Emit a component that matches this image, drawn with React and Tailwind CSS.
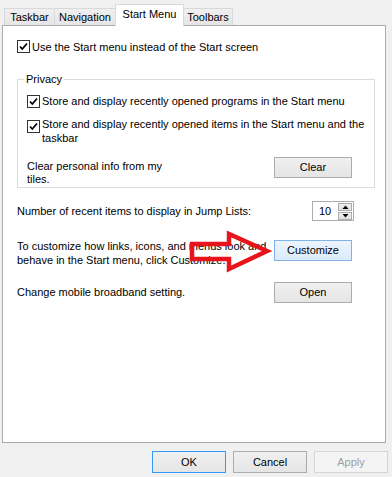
import React from 'react'

const Check = () => (
  <div className="w-[13px] h-[13px] border border-[#333333] bg-white flex items-center justify-center shrink-0">
    <svg width="11" height="11" viewBox="0 0 11 11">
      <path d="M2 5.5 L4.3 8 L9 2.5" stroke="#000" strokeWidth="1.8" fill="none" />
    </svg>
  </div>
)

const Btn = ({ children, className = '' }) => (
  <div
    className={`w-[78px] h-[21px] flex items-center justify-center border border-[#acacac] bg-gradient-to-b from-[#f0f0f0] to-[#e5e5e5] ${className}`}
  >
    {children}
  </div>
)

const Tab = ({ children, active, className = '' }) =>
  active ? (
    <div
      className={`relative z-10 -mb-px h-[22px] flex items-center justify-center bg-white border border-b-0 border-[#d9d9d9] pb-[2px] ${className}`}
    >
      {children}
    </div>
  ) : (
    <div
      className={`h-[17px] flex items-center justify-center bg-gradient-to-b from-[#f0f0f0] to-[#e5e5e5] border border-b-0 border-[#d9d9d9] ${className}`}
    >
      {children}
    </div>
  )

export default function App() {
  return (
    <div
      className="relative w-[392px] h-[477px] bg-[#f0f0f0] text-[11px] text-black overflow-hidden"
      style={{ fontFamily: '"Liberation Sans", Arial, sans-serif' }}
    >
      {/* Tabs */}
      <div className="flex items-end h-[25px] pl-[4px]">
        <Tab className="w-[51px]">Taskbar</Tab>
        <Tab className="w-[61px] border-l-0">Navigation</Tab>
        <Tab active className="w-[69px] -ml-px">Start Menu</Tab>
        <Tab className="w-[50px] -ml-px">Toolbars</Tab>
      </div>

      {/* Panel */}
      <div className="ml-[2px] w-[384px] h-[418px] bg-white border border-[#acacac] pl-[14px] pr-[10px]">
        <div className="mt-[14px] flex items-center gap-[2px] h-[13px]">
          <Check />
          <span className="leading-[14px]">Use the Start menu instead of the Start screen</span>
        </div>

        {/* Privacy group */}
        <div className="relative mt-[26px] h-[109px] border border-[#dcdcdc] pl-[9px] pr-[6px]">
          <span className="absolute left-[6px] top-[-8px] bg-white px-[2px] leading-[14px]">Privacy</span>
          <div className="mt-[14px] flex items-start gap-[2px]">
            <div className="mt-[1px]">
              <Check />
            </div>
            <span className="leading-[14px]">Store and display recently opened programs in the Start menu</span>
          </div>
          <div className="mt-[9px] flex items-start gap-[2px]">
            <div className="mt-[3px]">
              <Check />
            </div>
            <span className="leading-[14px]">
              Store and display recently opened items in the Start menu and the taskbar
            </span>
          </div>
          <div className="mt-[12px] flex items-start justify-between pr-[16px]">
            <span className="mt-[3px] w-[140px] leading-[13px]">Clear personal info from my tiles.</span>
            <Btn className="-ml-[2px]">Clear</Btn>
          </div>
        </div>

        <div className="mt-[13px] h-[20px] flex items-center justify-between pr-[21px]">
          <span>Number of recent items to display in Jump Lists:</span>
          <div className="w-[42px] h-[20px] border border-[#abadb3] flex items-center justify-between pl-[6px] pr-[1px]">
            <span>10</span>
            <div className="flex flex-col gap-px">
              <div className="w-[14px] h-[8px] bg-gradient-to-b from-[#f0f0f0] to-[#e0e0e0] border border-[#acacac] flex items-center justify-center">
                <svg width="7" height="4" viewBox="0 0 7 4"><path d="M0.5 4 L3.5 0.5 L6.5 4 Z" fill="#000" /></svg>
              </div>
              <div className="w-[14px] h-[8px] bg-gradient-to-b from-[#f0f0f0] to-[#e0e0e0] border border-[#acacac] flex items-center justify-center">
                <svg width="7" height="4" viewBox="0 0 7 4"><path d="M0.5 0 L3.5 3.5 L6.5 0 Z" fill="#000" /></svg>
              </div>
            </div>
          </div>
        </div>

        <div className="mt-[18px] flex items-start justify-between pr-[23px]">
          <span className="w-[250px] leading-[14px]">
            To customize how links, icons, and menus look and behave in the Start menu, click Customize.
          </span>
          <Btn className="mt-[1px] !border-[#7eb4ea] !from-[#ecf4fc] !to-[#dcecfc]">Customize</Btn>
        </div>

        <div className="mt-[15px] h-[21px] flex items-center justify-between pr-[23px]">
          <span>Change mobile broadband setting.</span>
          <Btn>Open</Btn>
        </div>
      </div>

      {/* Dialog buttons */}
      <div className="mt-[8px] flex justify-end gap-[7px] pr-[4px]">
        <Btn className="!w-[74px] !h-[22px] !border-[#3399ff]">OK</Btn>
        <Btn className="!w-[74px] !h-[22px]">Cancel</Btn>
        <div className="w-[74px] h-[22px] flex items-center justify-center border border-[#d5d5d5] bg-[#f4f4f4] text-[#a0a0a0]">
          Apply
        </div>
      </div>

      {/* Red arrow annotation */}
      <svg className="absolute left-0 top-0 pointer-events-none" width="392" height="477">
        <polygon
          points="192,244 229,244 229,234 267,251 229,269 229,259 192,259"
          fill="none"
          stroke="#e8141c"
          strokeWidth="4.5"
          strokeLinejoin="miter"
        />
      </svg>
    </div>
  )
}
